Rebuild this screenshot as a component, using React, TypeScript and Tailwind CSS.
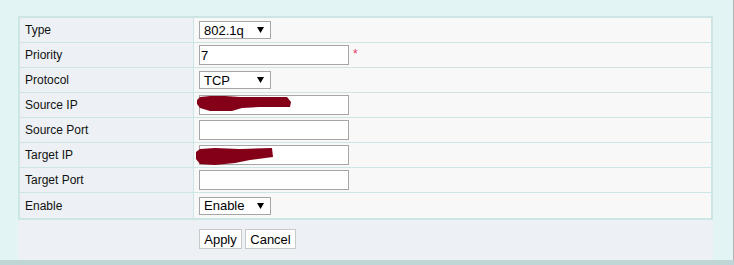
import React from "react";

const font = { fontFamily: '"Liberation Sans", Arial, sans-serif' };

function Arrow() {
  return (
    <svg width="7" height="6" viewBox="0 0 7 6" className="shrink-0">
      <path d="M0 0 H7 L3.5 6 Z" fill="#000" />
    </svg>
  );
}

function Select({ value }: { value: string }) {
  return (
    <div className="w-[72px] h-[18px] border border-[#a6a6a6] bg-white flex items-center justify-between pl-[4px] pr-[6px] text-[13px] text-black leading-none">
      <span>{value}</span>
      <Arrow />
    </div>
  );
}

function Input({ value, scribble }: { value?: string; scribble?: "a" | "b" }) {
  return (
    <div className="relative w-[150px] h-[20px] border border-[#a6a6a6] bg-white flex items-center pl-[1px] text-[13px] text-black leading-none">
      <span>{value}</span>
      {scribble === "a" && (
        <svg className="absolute left-[-3px] top-[0px]" width="96" height="17" viewBox="0 0 96 17">
          <path
            d="M0 4 L3 1 L13 0 L28 0 L43 1 L90 1 L94 6 L93 11 L63 11 L45 12 L35 15 L13 15 L3 12 L0 8 Z"
            fill="#840018"
          />
        </svg>
      )}
      {scribble === "b" && (
        <svg className="absolute left-[-4px] top-[2px]" width="78" height="18" viewBox="0 0 78 18">
          <path
            d="M0 4 L4 1 L19 0 L44 1 L76 0 L77 9 L54 12 L39 15 L19 17 L4 16 L0 11 Z"
            fill="#840018"
          />
        </svg>
      )}
    </div>
  );
}

const rows: { label: string; el: React.ReactNode }[] = [
  { label: "Type", el: <Select value="802.1q" /> },
  {
    label: "Priority",
    el: (
      <div className="flex items-start">
        <Input value="7" />
        <span className="ml-[4px] text-[12px] leading-none text-[#f0306a] mt-[3px]">*</span>
      </div>
    ),
  },
  { label: "Protocol", el: <Select value="TCP" /> },
  { label: "Source IP", el: <Input scribble="a" /> },
  { label: "Source Port", el: <Input /> },
  { label: "Target IP", el: <Input scribble="b" /> },
  { label: "Target Port", el: <Input /> },
  { label: "Enable", el: <Select value="Enable" /> },
];

export default function App() {
  return (
    <div className="w-[734px] h-[265px] flex flex-col bg-[#e2f4f4] overflow-hidden" style={font}>
      <div className="flex-1 flex">
        <div className="flex-1 pl-[18px] pt-[16px] pr-[20px]">
          <div className="border-2 border-[#cde5e5] flex flex-col">
            {rows.map((r, i) => (
              <div
                key={r.label}
                className={
                  "flex h-[25px] " + (i < rows.length - 1 ? "border-b border-[#cde5e5]" : "h-[24px]")
                }
              >
                <div className="w-[174px] border-r border-[#cde5e5] bg-[#edf1f5] flex items-center pl-[5px] text-[12px] text-[#111]">
                  {r.label}
                </div>
                <div className="flex-1 bg-[#f8f8f8] flex items-center pl-[5px]">{r.el}</div>
              </div>
            ))}
          </div>
          <div className="h-[40px] bg-[#edf0f5] flex items-start pt-[9px] pl-[181px] gap-[3px]">
            <button className="w-[43px] h-[20px] border border-[#c8c8c8] bg-white text-[13px] text-black leading-none">
              Apply
            </button>
            <button className="w-[51px] h-[20px] border border-[#c8c8c8] bg-white text-[13px] text-black leading-none">
              Cancel
            </button>
          </div>
        </div>
        <div className="w-px bg-[#b4b4b4]" />
      </div>
      <div className="h-[6px] bg-[#c0d6d6]" />
    </div>
  );
}
